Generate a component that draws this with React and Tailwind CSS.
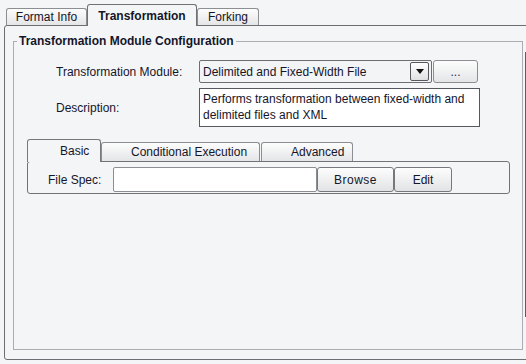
import React from "react";

const tabIdle =
  "flex items-center justify-center h-[17px] mb-px border border-b-0 border-[#8b8e93] rounded-t-[3px] bg-gradient-to-b from-[#fdfdfd] to-[#e4e5e7]";

function Button({ className = "", children }) {
  return (
    <button
      type="button"
      className={`flex items-center justify-center h-[25px] border border-[#75787d] rounded-[3px] bg-gradient-to-b from-[#fdfdfd] to-[#e2e3e5] text-[12px] text-[#15152a] ${className}`}
    >
      {children}
    </button>
  );
}

export default function App() {
  return (
    <div className="relative w-[526px] h-[364px] overflow-hidden bg-[#f4f5f7] pt-[4px] font-['Liberation_Sans',Arial,sans-serif] text-[12px] text-[#15152a]">
      {/* top tabs */}
      <div className="relative z-10 flex items-end pl-[6px]">
        <div className={`${tabIdle} w-[81px]`}>Format Info</div>
        <div className="flex items-center justify-center w-[110px] h-[22px] border border-b-0 border-[#6e7176] rounded-t-[3px] bg-[#f4f5f7] font-bold">
          Transformation
        </div>
        <div className={`${tabIdle} w-[62px]`}>Forking</div>
      </div>

      {/* main panel */}
      <div className="-mt-px ml-[4px] w-[540px] h-[335px] border border-[#6b6e73] rounded-[3px]">
        <fieldset className="mt-[8px] ml-[8px] w-[510px] h-[316px] border border-[#abadb2]">
          <legend className="ml-[3px] px-[2px] font-bold leading-[14px]">
            Transformation Module Configuration
          </legend>

          <div className="mt-[12px] flex items-center pl-[42px]">
            <div className="w-[143px]">Transformation Module:</div>
            <div className="flex items-center w-[233px] h-[23px] border border-[#6b6e73] rounded-[2px] bg-[#f3f4f6] pl-[3px]">
              <span className="flex-1">Delimited and Fixed-Width File</span>
              <div className="flex items-center justify-center w-[19px] h-[19px] mr-[2px] border border-[#55585d] rounded-[2px] bg-gradient-to-b from-white to-[#dfe0e2]">
                <svg width="8" height="5" viewBox="0 0 8 5">
                  <path d="M0 0h8L4 5z" fill="#111" />
                </svg>
              </div>
            </div>
            <div className="ml-px flex items-center justify-center w-[45px] h-[23px] border border-[#8b8e93] rounded-[3px] bg-gradient-to-b from-[#fdfdfd] to-[#e4e5e7] text-[#2a2a6a]">
              ...
            </div>
          </div>

          <div className="mt-[5px] flex items-center pl-[42px]">
            <div className="w-[143px]">Description:</div>
            <div className="w-[281px] h-[39px] border border-[#55585d] bg-white px-[3px] pt-[2px] leading-[16px]">
              Performs transformation between fixed-width and
              <br />
              delimited files and XML
            </div>
          </div>

          {/* inner tabs */}
          <div className="mt-[12px] ml-[13px]">
            <div className="relative z-10 flex items-end">
              <div className="flex items-center w-[74px] h-[23px] pl-[32px] border border-b-0 border-[#75787d] rounded-t-[3px] bg-[#f4f5f7]">
                Basic
              </div>
              <div className={`${tabIdle} !h-[19px] !justify-start w-[159px] pl-[29px]`}>
                Conditional Execution
              </div>
              <div className={`${tabIdle} !h-[19px] !justify-start ml-px w-[92px] pl-[29px]`}>
                Advanced
              </div>
            </div>
            <div className="-mt-px w-[483px] h-[33px] border border-[#707378] rounded-[3px] pt-[5px] flex">
              <div className="w-[85px] pl-[20px] h-[25px] flex items-center">File Spec:</div>
              <div className="w-[204px] h-[25px] border border-[#8b8e93] rounded-[2px] bg-white" />
              <Button className="w-[77px] tracking-[0.5px]">Browse</Button>
              <Button className="w-[58px]">Edit</Button>
            </div>
          </div>
        </fieldset>
      </div>

      <div className="absolute left-[525px] top-[52px] w-px h-[265px] bg-[#5a5d62]" />
    </div>
  );
}
